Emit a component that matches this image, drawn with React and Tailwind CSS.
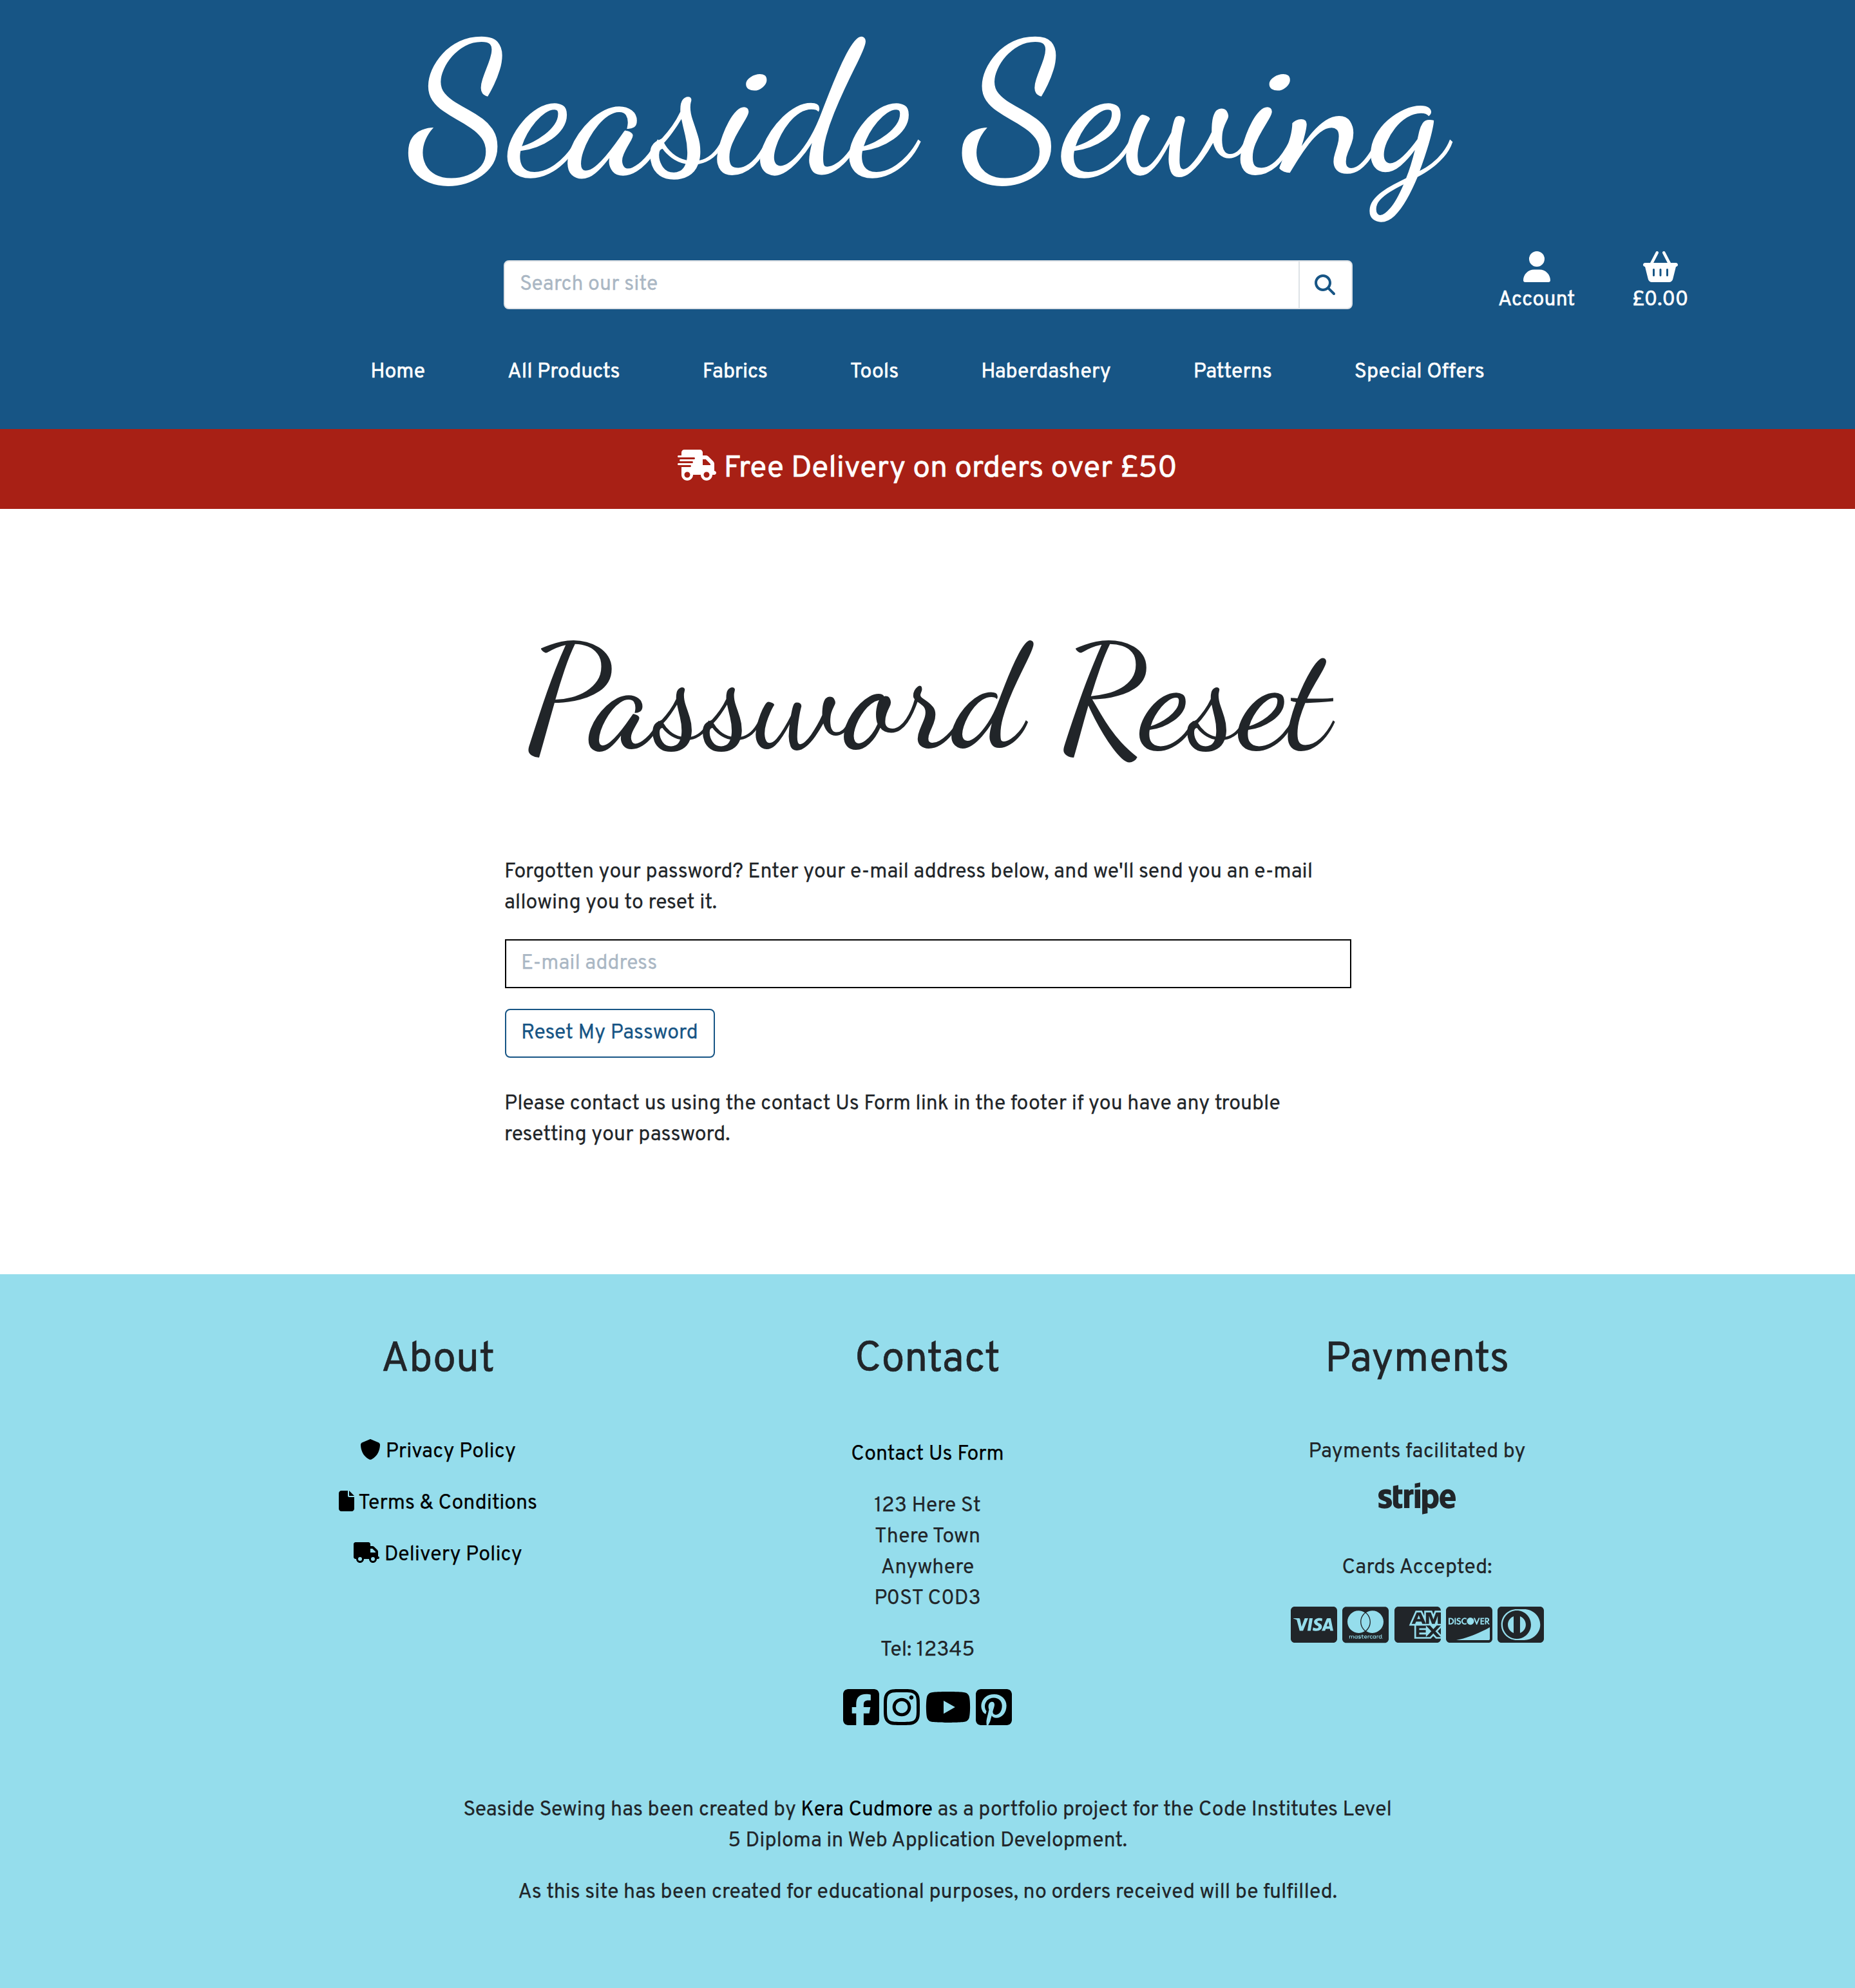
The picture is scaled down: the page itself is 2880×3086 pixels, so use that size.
import React from "react";
import {
  FaUser,
  FaBasketShopping,
  FaMagnifyingGlass,
  FaTruckFast,
  FaShield,
  FaFile,
  FaTruck,
  FaSquareFacebook,
  FaInstagram,
  FaYoutube,
  FaSquarePinterest,
  FaStripe,
  FaCcVisa,
  FaCcMastercard,
  FaCcAmex,
  FaCcDiscover,
  FaCcDinersClub,
} from "react-icons/fa6";

const navLinks = [
  "Home",
  "All Products",
  "Fabrics",
  "Tools",
  "Haberdashery",
  "Patterns",
  "Special Offers",
];

const policies = [
  { icon: FaShield, label: "Privacy Policy", size: "w-[32px]" },
  { icon: FaFile, label: "Terms & Conditions", size: "w-[24px]" },
  { icon: FaTruck, label: "Delivery Policy", size: "w-[40px]" },
];

const socials = [
  { icon: FaSquareFacebook, size: "w-[56px]" },
  { icon: FaInstagram, size: "w-[56px]" },
  { icon: FaYoutube, size: "w-[72px]" },
  { icon: FaSquarePinterest, size: "w-[56px]" },
];

const cards = [FaCcVisa, FaCcMastercard, FaCcAmex, FaCcDiscover, FaCcDinersClub];

function Header() {
  return (
    <header className="h-[666px] bg-[#175585] text-white [-webkit-text-stroke:0.6px]">
      <h1 className="text-center font-['Dancing_Script',cursive] text-[288px] leading-[344px] font-medium [-webkit-text-stroke:0px]">
        Seaside Sewing
      </h1>

      <div className="flex items-start pt-[46px] pl-[782px]">
        <form className="mt-[14px] flex h-[76px] w-[1318px] overflow-hidden rounded-[8px] border-2 border-[#dee2e6] bg-white [-webkit-text-stroke:0.3px]">
          <input
            type="text"
            placeholder="Search our site"
            className="h-[72px] flex-1 px-[23px] text-[32px] leading-[48px] outline-none placeholder:text-[#aab7c4]"
          />
          <button
            type="button"
            className="flex w-[82px] items-center justify-center border-l-2 border-[#dee2e6] pr-[2px] text-[#175585]"
          >
            <FaMagnifyingGlass className="size-[32px]" />
          </button>
        </form>

        <div className="ml-[189.5px] flex">
          <a className="flex w-[192px] flex-col items-center">
            <FaUser className="h-[48px] w-[42px]" />
            <span className="mt-[4px]">Account</span>
          </a>
          <a className="flex w-[192px] flex-col items-center">
            <FaBasketShopping className="h-[48px] w-[54px]" />
            <span className="mt-[4px]">£0.00</span>
          </a>
        </div>
      </div>

      <nav className="mt-[64px] flex justify-center gap-32">
        {navLinks.map((label) => (
          <a key={label}>{label}</a>
        ))}
      </nav>
    </header>
  );
}

function Banner() {
  return (
    <div className="h-[124px] bg-[#a82015] pt-[26px] text-center text-[48px] leading-[72px] text-white [-webkit-text-stroke:0.6px]">
      <FaTruckFast className="inline-block h-[48px] w-[60px] align-[-6px]" /> Free Delivery on orders over £50
    </div>
  );
}

function ResetForm() {
  return (
    <main className="h-[1188px] bg-white pt-[160px]">
      <h2 className="text-center font-['Dancing_Script',cursive] text-[224px] leading-[269px] font-medium [-webkit-text-stroke:0px]">
        Password Reset
      </h2>
      <div className="mt-[111px] ml-[784px] w-[1314px]">
        <p className="-ml-px">
          Forgotten your password? Enter your e-mail address below, and we'll send you an e-mail
          allowing you to reset it.
        </p>
        <input
          type="email"
          placeholder="E-mail address"
          className="mt-8 block h-[76px] w-full border-2 border-black px-[23px] text-[32px] leading-[48px] outline-none placeholder:text-[#aab7c4]"
        />
        <button
          type="button"
          className="mt-8 block h-[76px] rounded-[8px] border-2 border-[#175585] pr-6 pl-[23px] text-[#175585]"
        >
          Reset My Password
        </button>
        <p className="mt-12 -ml-px">
          Please contact us using the contact Us Form link in the footer if you have any trouble
          resetting your password.
        </p>
      </div>
    </main>
  );
}

function FooterHeading({ children }) {
  return (
    <h3 className="text-[64px] leading-[76px] font-normal [-webkit-text-stroke:0.6px]">{children}</h3>
  );
}

function Footer() {
  return (
    <footer className="h-[1108px] bg-[#95ddec] pt-[96px] text-center">
      <div className="mx-auto grid h-[608px] w-[2280px] grid-cols-3">
        <section>
          <FooterHeading>About</FooterHeading>
          <ul className="mt-20 space-y-8 text-black">
            {policies.map(({ icon: Icon, label, size }) => (
              <li key={label}>
                <Icon className={`inline-block h-[32px] align-[-4px] ${size}`} /> {label}
              </li>
            ))}
          </ul>
        </section>

        <section>
          <FooterHeading>Contact</FooterHeading>
          <p className="mt-[84px] text-black">Contact Us Form</p>
          <address className="mt-8 not-italic">
            123 Here St
            <br />
            There Town
            <br />
            Anywhere
            <br />
            P0ST C0D3
          </address>
          <p className="mt-8">Tel: 12345</p>
          <div className="mt-8 flex justify-center gap-[7.6px] text-black">
            {socials.map(({ icon: Icon, size }, i) => (
              <Icon key={i} className={`h-[64px] ${size}`} />
            ))}
          </div>
        </section>

        <section>
          <FooterHeading>Payments</FooterHeading>
          <p className="mt-20">Payments facilitated by</p>
          <FaStripe className="mx-auto h-[96px] w-[120px]" />
          <p className="mt-9">Cards Accepted:</p>
          <div className="mt-8 flex justify-center gap-[8.3px] pl-px">
            {cards.map((Icon, i) => (
              <Icon key={i} className="h-[64px] w-[72px]" />
            ))}
          </div>
        </section>
      </div>

      <div className="mx-auto mt-[104px] w-[1480px]">
        <p>
          Seaside Sewing has been created by <a className="text-black">Kera Cudmore</a> as a
          portfolio project for the Code Institutes Level
          <br />5 Diploma in Web Application Development.
        </p>
        <p className="mt-8">
          As this site has been created for educational purposes, no orders received will be
          fulfilled.
        </p>
      </div>
    </footer>
  );
}

export default function App() {
  return (
    <div className="w-full font-['Overpass','Roboto',sans-serif] text-[32px] leading-[48px] text-[#212529] [-webkit-text-stroke:0.25px]">
      <Header />
      <Banner />
      <ResetForm />
      <Footer />
    </div>
  );
}
